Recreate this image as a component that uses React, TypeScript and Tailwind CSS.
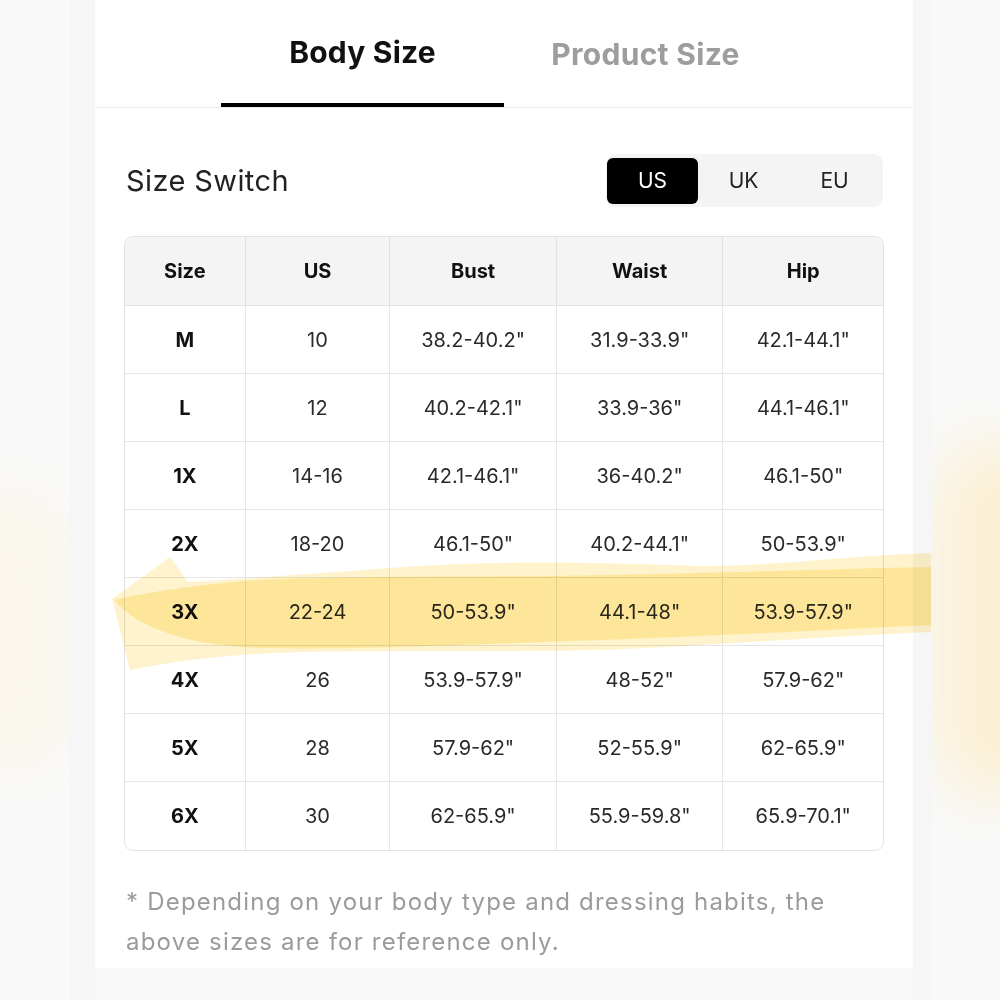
import React from "react";

const rows: [string, string, string, string, string][] = [
  ["M", "10", '38.2-40.2"', '31.9-33.9"', '42.1-44.1"'],
  ["L", "12", '40.2-42.1"', '33.9-36"', '44.1-46.1"'],
  ["1X", "14-16", '42.1-46.1"', '36-40.2"', '46.1-50"'],
  ["2X", "18-20", '46.1-50"', '40.2-44.1"', '50-53.9"'],
  ["3X", "22-24", '50-53.9"', '44.1-48"', '53.9-57.9"'],
  ["4X", "26", '53.9-57.9"', '48-52"', '57.9-62"'],
  ["5X", "28", '57.9-62"', '52-55.9"', '62-65.9"'],
  ["6X", "30", '62-65.9"', '55.9-59.8"', '65.9-70.1"'],
];

const widths = ["w-[121px]", "w-[145px]", "w-[167px]", "w-[167px]", "w-[160px]"];

export default function App() {
  return (
    <div className="relative w-[1000px] h-[1000px] overflow-hidden bg-[#f9f9f9] font-['Inter',sans-serif]">
      {/* side glows */}
      <div className="absolute left-[-50px] top-[490px] w-[120px] h-[280px] rounded-full bg-[#fbf3dc] blur-[30px] opacity-50" />
      <div className="absolute left-[935px] top-[440px] w-[130px] h-[360px] rounded-full bg-[#fcecc4] blur-[30px] opacity-70" />
      <div className="absolute left-[70px] top-0 w-[25px] h-[1000px] bg-[#f6f6f6]" />
      <div className="absolute left-[913px] top-0 w-[18px] h-[1000px] bg-[#f6f6f6]" />

      {/* card */}
      <div className="relative ml-[95px] w-[818px] h-[968px] bg-white flex flex-col">
        {/* tabs */}
        <div className="h-[108px] border-b border-[#ebebeb] flex justify-center">
          <div className="w-[283px] flex flex-col items-center">
            <div className="flex-1 flex items-center pt-[1px] text-[30px] font-bold text-[#111] tracking-[0.2px]">
              Body Size
            </div>
            <div className="w-full h-[4px] bg-black" />
          </div>
          <div className="w-[283px] flex flex-col items-center">
            <div className="flex-1 flex items-center pt-[1px] text-[30px] font-bold text-[#9d9d9d] tracking-[0.3px]">
              Product Size
            </div>
          </div>
        </div>

        {/* size switch */}
        <div className="mt-[46px] pl-[31px] pr-[30px] flex items-center justify-between">
          <div className="text-[29px] text-[#222] tracking-[0.4px]">Size Switch</div>
          <div className="h-[53px] w-[277px] rounded-[9px] bg-[#f4f4f4] flex items-center px-[1px]">
            <div className="w-[91px] h-[46px] rounded-[6px] bg-black text-white text-[21px] flex items-center justify-center">
              US
            </div>
            <div className="w-[91px] h-[46px] text-[#222] text-[21px] flex items-center justify-center">UK</div>
            <div className="w-[91px] h-[46px] text-[#222] text-[21px] flex items-center justify-center">EU</div>
          </div>
        </div>

        {/* table */}
        <div className="mt-[29px] mx-[29px] w-[760px] rounded-[9px] border border-[#e2e2e2] overflow-hidden">
          <div className="flex h-[69px] bg-[#f4f4f4] border-b border-[#e2e2e2]">
            {["Size", "US", "Bust", "Waist", "Hip"].map((h, i) => (
              <div
                key={h}
                className={`${widths[i]} ${i < 4 ? "border-r border-[#e2e2e2]" : ""} flex items-center justify-center text-[20px] font-bold text-[#111]`}
              >
                {h}
              </div>
            ))}
          </div>
          {rows.map((r, ri) => (
            <div
              key={r[0]}
              className={`flex h-[68px] ${ri < rows.length - 1 ? "border-b border-[#e6e6e6]" : ""}`}
            >
              {r.map((c, i) => (
                <div
                  key={i}
                  className={`${widths[i]} ${i < 4 ? "border-r border-[#e6e6e6]" : ""} flex items-center justify-center text-[20px] ${
                    i === 0 ? "font-bold text-[#111]" : "text-[#2a2a2a]"
                  }`}
                >
                  {c}
                </div>
              ))}
            </div>
          ))}
        </div>

        {/* note */}
        <div className="mt-[31px] pl-[31px] text-[24px] leading-[40px] tracking-[1.2px] text-[#9b9b9b] whitespace-nowrap">
          <div>* Depending on your body type and dressing habits, the</div>
          <div>above sizes are for reference only.</div>
        </div>
      </div>

      {/* highlighter stroke */}
      <svg
        className="absolute left-0 top-0 pointer-events-none mix-blend-multiply"
        width="1000"
        height="1000"
        viewBox="0 0 1000 1000"
      >
        <path
          d="M112,599 L170,557 L188,582 C260,578 330,572 420,566 C520,560 600,563 700,566 C780,566 840,556 931,553 L931,632 C800,638 700,646 600,650 C500,652 400,650 300,652 C230,654 180,660 130,670 Z"
          fill="rgb(252,214,90)"
          fillOpacity="0.3"
        />
        <path
          d="M114,600 C150,592 200,584 260,580 C350,576 450,577 550,576 C700,574 820,569 931,567 L931,625 C820,630 720,636 600,640 C480,644 350,650 260,648 C190,645 140,630 114,600 Z"
          fill="rgb(252,214,90)"
          fillOpacity="0.45"
        />
      </svg>
    </div>
  );
}
